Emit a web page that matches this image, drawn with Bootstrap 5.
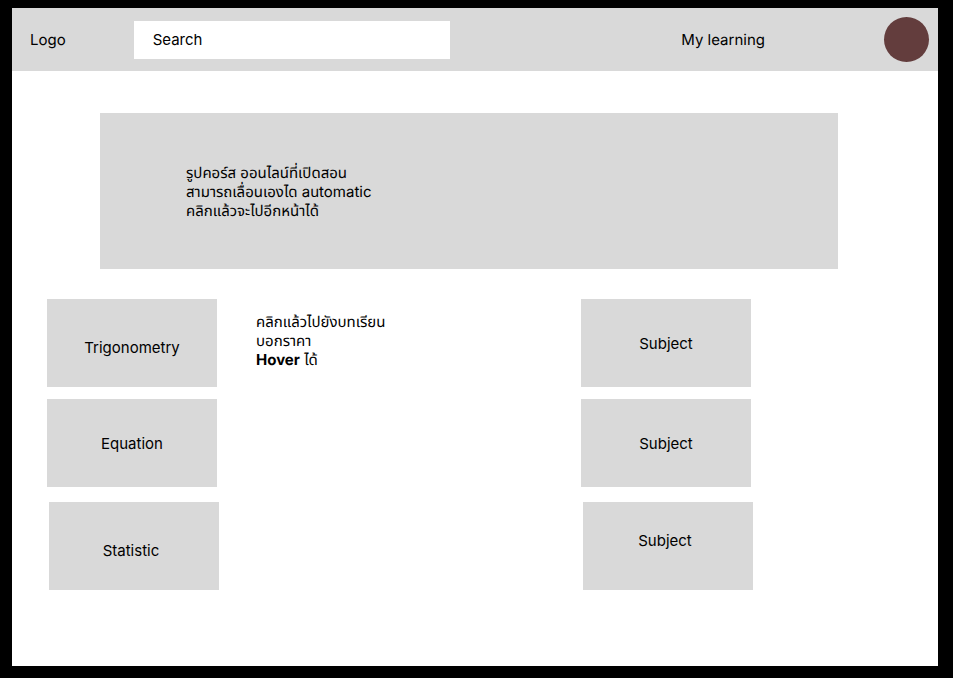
<!DOCTYPE html>
<html lang="th">
<head>
<meta charset="utf-8">
<meta name="viewport" content="width=device-width, initial-scale=1">
<title>My learning</title>
<link href="https://cdn.jsdelivr.net/npm/bootstrap@5.3.0/dist/css/bootstrap.min.css" rel="stylesheet">
<style>
body{background:#000;color:#000;font-family:Inter,"Noto Sans Thai","Noto Sans",sans-serif;font-size:15px;line-height:19px;text-rendering:geometricPrecision;padding:8px 15px 12px 12px}
.page{background:#fff;min-height:calc(100vh - 20px)}
.topbar{background:#d9d9d9;min-height:63px;padding:0 9px 0 18px}
.brand,.nav-text{color:#000;text-decoration:none}
.finder{margin-left:68px;flex:0 1 316px}
.finder input{height:38px;padding:0 19px 1px;border:0;border-radius:0;background:#fff;color:#000;font-size:15px}
.finder input::placeholder{color:#000;opacity:1}
.nav-text{margin-right:119px}
.avatar{width:45px;height:45px;background:#633d3d;border:0}
.banner{background:#d9d9d9;margin:42px 100px 0 88px;min-height:156px;padding:0 86px}
.subjects{margin-top:30px;padding-left:35px}
.tiles{flex:0 0 173px;gap:12px}
.tile{background:#d9d9d9;color:#000;border:0;border-radius:0;width:170px;height:88px;padding:0;font-size:15px;line-height:19px}
.tile:hover{background:#ccc;color:#000}
.tile-low{padding-top:8px}
.tile-high{padding-bottom:12px}
.tile-last{margin:3px 0 0 2px;padding-right:6px}
.note{margin:13px 0 0 36px;flex:0 0 325px}
.note strong{font-weight:700}
</style>
<script src="https://cdn.jsdelivr.net/npm/bootstrap@5.3.0/dist/js/bootstrap.bundle.min.js"></script>
</head>
<body>
<div class="page">
<header class="topbar d-flex align-items-center">
<a class="brand" href="#">Logo</a>
<form class="finder" role="search"><input class="form-control" type="text" placeholder="Search" aria-label="Search"></form>
<a class="nav-text ms-auto" href="#">My learning</a>
<button class="avatar rounded-circle" type="button" aria-label="Account"></button>
</header>
<main>
<section class="banner d-flex align-items-center"><p class="mb-0">รูปคอร์ส ออนไลน์ที่เปิดสอน<br>สามารถเลื่อนเองได automatic<br>คลิกแล้วจะไปอีกหน้าได้</p></section>
<section class="subjects d-flex align-items-start">
<div class="tiles d-flex flex-column">
<button class="btn tile tile-low" type="button">Trigonometry</button>
<button class="btn tile" type="button">Equation</button>
<button class="btn tile tile-last tile-low" type="button">Statistic</button>
</div>
<p class="note">คลิกแล้วไปยังบทเรียน<br>บอกราคา<br><strong>Hover</strong> ได้</p>
<div class="tiles d-flex flex-column">
<button class="btn tile" type="button">Subject</button>
<button class="btn tile" type="button">Subject</button>
<button class="btn tile tile-last tile-high" type="button">Subject</button>
</div>
</section>
</main>
</div>
</body>
</html>
